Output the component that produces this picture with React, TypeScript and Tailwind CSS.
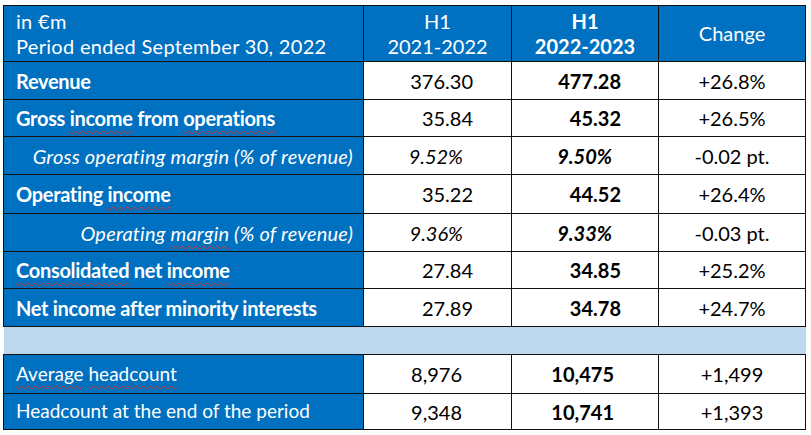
import React from 'react';

type Row = {
  label: React.ReactNode;
  prev: string;
  curr: string;
  change: string;
  kind: 'main' | 'ratio' | 'staff';
  h: string;
};

const Squiggle = ({ children }: { children: React.ReactNode }) => (
  <span className="underline decoration-wavy decoration-[#d9342b] decoration-1 underline-offset-[4px]">
    {children}
  </span>
);

const rows: Row[] = [
  { label: 'Revenue', prev: '376.30', curr: '477.28', change: '+26.8%', kind: 'main', h: 'h-[38px]' },
  {
    label: (
      <>
        Gross <Squiggle>income</Squiggle> from <Squiggle>operations</Squiggle>
      </>
    ),
    prev: '35.84',
    curr: '45.32',
    change: '+26.5%',
    kind: 'main',
    h: 'h-[37px]',
  },
  {
    label: 'Gross operating margin (% of revenue)',
    prev: '9.52%',
    curr: '9.50%',
    change: '-0.02 pt.',
    kind: 'ratio',
    h: 'h-[38px]',
  },
  {
    label: (
      <>
        Operating <Squiggle>income</Squiggle>
      </>
    ),
    prev: '35.22',
    curr: '44.52',
    change: '+26.4%',
    kind: 'main',
    h: 'h-[39px]',
  },
  {
    label: (
      <>
        Operating <Squiggle>margin</Squiggle> (% of revenue)
      </>
    ),
    prev: '9.36%',
    curr: '9.33%',
    change: '-0.03 pt.',
    kind: 'ratio',
    h: 'h-[38px]',
  },
  {
    label: (
      <>
        <Squiggle>Consolidated</Squiggle> net <Squiggle>income</Squiggle>
      </>
    ),
    prev: '27.84',
    curr: '34.85',
    change: '+25.2%',
    kind: 'main',
    h: 'h-[37px]',
  },
  {
    label: 'Net income after minority interests',
    prev: '27.89',
    curr: '34.78',
    change: '+24.7%',
    kind: 'main',
    h: 'h-[38px]',
  },
];

const staff: Row[] = [
  {
    label: (
      <>
        <Squiggle>Average</Squiggle> <Squiggle>headcount</Squiggle>
      </>
    ),
    prev: '8,976',
    curr: '10,475',
    change: '+1,499',
    kind: 'staff',
    h: 'h-[39px]',
  },
  {
    label: 'Headcount at the end of the period',
    prev: '9,348',
    curr: '10,741',
    change: '+1,393',
    kind: 'staff',
    h: 'h-[36px]',
  },
];

const cell = 'border border-[#111] p-0 align-middle';

const DataRow = ({ row }: { row: Row }) => {
  const labelCls =
    row.kind === 'main'
      ? 'font-bold text-left pl-[12px] tracking-[-0.3px]'
      : row.kind === 'ratio'
        ? 'italic text-right pr-[10px] tracking-[0.2px]'
        : 'text-left pl-[12px] text-[19px]';
  const prevCls =
    row.kind === 'main' ? 'pr-[38px]' : row.kind === 'ratio' ? 'italic pr-[48px]' : 'pr-[49px]';
  const currCls =
    row.kind === 'main'
      ? 'font-bold pr-[37px]'
      : row.kind === 'ratio'
        ? 'font-bold italic pr-[46px]'
        : 'font-bold pr-[44px]';

  return (
    <tr className={row.h}>
      <td className={`${cell} bg-[#0070c0] text-white ${labelCls}`}>{row.label}</td>
      <td className={`${cell} bg-white text-right ${prevCls}`}>{row.prev}</td>
      <td className={`${cell} bg-white text-right ${currCls}`}>{row.curr}</td>
      <td className={`${cell} bg-white text-center`}>{row.change}</td>
    </tr>
  );
};

export default function App() {
  return (
    <div className="w-[811px] h-[435px] bg-white pt-[5px] pl-[3px] font-['Lato',_'Noto_Sans',_sans-serif] text-[20px] text-black">
      <table className="table-fixed border-collapse w-[802px]">
        <colgroup>
          <col className="w-[360px]" />
          <col className="w-[148px]" />
          <col className="w-[147px]" />
          <col className="w-[147px]" />
        </colgroup>
        <tbody>
          {/* Header */}
          <tr className="h-[56px] bg-[#0070c0] text-white leading-[25px]">
            <td className={`${cell} text-left pl-[12px] tracking-[0.3px]`}>
              <div>in €m</div>
              <div>Period ended September 30, 2022</div>
            </td>
            <td className={`${cell} text-center`}>
              <div>H1</div>
              <div>2021-2022</div>
            </td>
            <td className={`${cell} text-center font-bold`}>
              <div>H1</div>
              <div>2022-2023</div>
            </td>
            <td className={`${cell} text-center`}>Change</td>
          </tr>

          {rows.map((row, i) => (
            <DataRow key={i} row={row} />
          ))}

          {/* Spacer band */}
          <tr className="h-[28px]">
            <td colSpan={4} className="p-0 bg-[#bdd7ee] border-y border-[#111]" />
          </tr>

          {staff.map((row, i) => (
            <DataRow key={i} row={row} />
          ))}
        </tbody>
      </table>
    </div>
  );
}
